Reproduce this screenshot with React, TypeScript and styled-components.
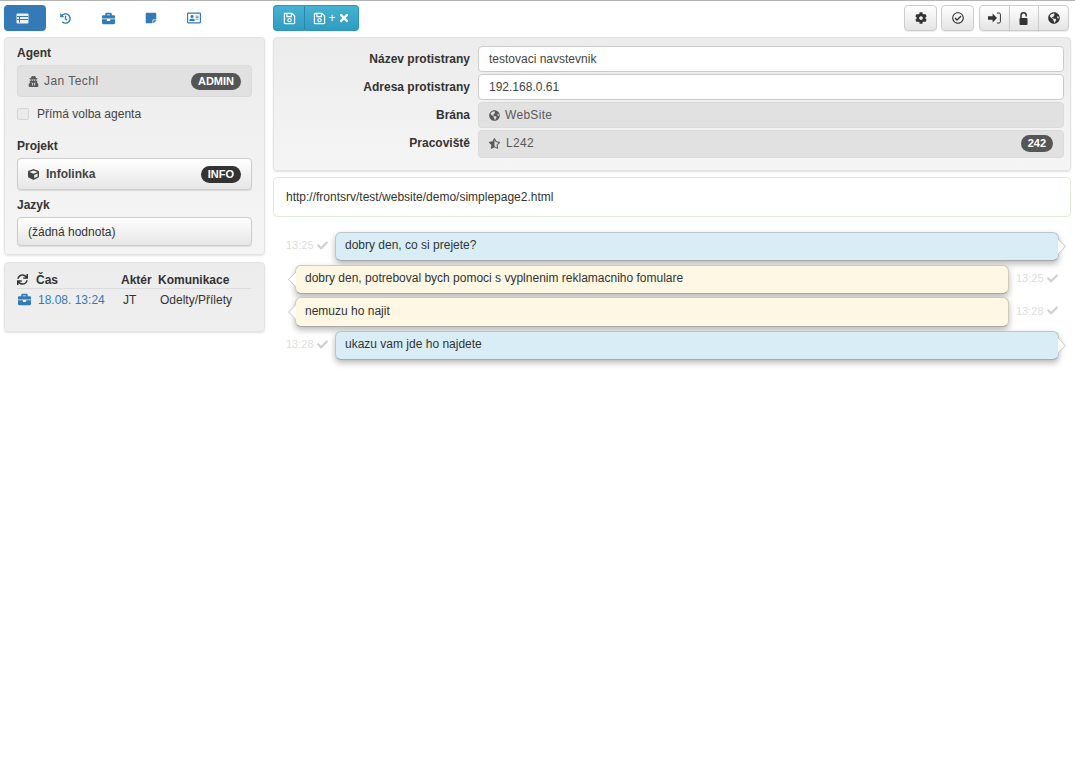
import React from 'react';
import styled, { createGlobalStyle } from 'styled-components';
import {
  FaHistory,
  FaBriefcase,
  FaStickyNote,
  FaRegAddressCard,
  FaUserSecret,
  FaCube,
  FaSync,
  FaRegSave,
  FaTimes,
  FaCog,
  FaRegCheckCircle,
  FaGlobeAmericas,
  FaStarHalfAlt,
  FaCheck
} from 'react-icons/fa';

const GlobalStyle = createGlobalStyle`
  html, body {
    margin: 0;
    padding: 0;
    background: #fff;
  }
  * {
    box-sizing: border-box;
  }
  body {
    font-family: "Liberation Sans", Arial, sans-serif;
    font-size: 12px;
    color: #333;
  }
`;

const Root = styled.div`
  border-top: 1px solid #b4b4b4;
  padding: 4px 4px 0;
  display: grid;
  grid-template-columns: 261px 798px;
  column-gap: 8px;
  min-height: 780px;
  align-content: start;
`;

const Column = styled.div`
  display: flex;
  flex-direction: column;
`;

const Toolbar = styled.div`
  display: flex;
  height: 26px;
  margin-bottom: 6px;
  align-items: stretch;
`;

const RightToolbar = styled(Toolbar)`
  padding-right: 2px;
`;

const Tab = styled.div<{ $active?: boolean }>`
  width: ${(props) => (props.$active ? '42px' : '43px')};
  padding-right: 5px;
  border-radius: 4px;
  display: flex;
  align-items: center;
  justify-content: center;
  font-size: 14px;
  color: #337ab7;
  background: ${(props) => (props.$active ? '#337ab7' : 'transparent')};
`;

const ButtonGroup = styled.div`
  display: flex;
`;

const SaveButton = styled.div<{ $wide?: boolean }>`
  height: 26px;
  width: ${(props) => (props.$wide ? '55px' : '31px')};
  color: #fff;
  font-size: 12px;
  display: flex;
  gap: 2px;
  align-items: center;
  justify-content: center;
  background: linear-gradient(to bottom, #46b2d4, #2f9cc0);
  border: 1px solid #2b96ba;
  border-radius: ${(props) => (props.$wide ? '0 4px 4px 0' : '4px 0 0 4px')};
  ${(props) => (props.$wide ? 'border-left: 1px solid #2a87a8;' : 'border-right: 0;')}
`;

const ToolSpacer = styled.div`
  flex: 1;
`;

const ToolButton = styled.div<{ $pos?: 'first' | 'mid' | 'last' }>`
  width: ${(props) =>
    props.$pos === 'mid' ? '30px' : props.$pos ? '31px' : '33px'};
  height: 26px;
  display: flex;
  align-items: center;
  justify-content: center;
  font-size: 12px;
  color: #333;
  background: linear-gradient(to bottom, #fff, #e4e4e4);
  border: 1px solid #ccc;
  border-radius: ${(props) =>
    props.$pos === 'first'
      ? '4px 0 0 4px'
      : props.$pos === 'last'
        ? '0 4px 4px 0'
        : props.$pos === 'mid'
          ? '0'
          : '4px'};
  ${(props) => (props.$pos && props.$pos !== 'first' ? 'margin-left: -1px;' : '')}
  box-shadow: 0 1px 1px rgba(0, 0, 0, 0.08);
`;

const ToolSet = styled.div`
  display: flex;
  margin-left: 5px;
`;

const ToolGap = styled.div`
  margin-left: 4px;
`;

const Well = styled.div`
  background: linear-gradient(to bottom, #ececec, #f5f5f5);
  border: 1px solid #e3e3e3;
  border-radius: 4px;
  box-shadow: 0 1px 2px rgba(0, 0, 0, 0.12);
`;

const AgentWell = styled(Well)`
  padding: 8px 12px 0;
  height: 218px;
  margin-bottom: 7px;
`;

const FieldTitle = styled.div<{ $mt?: number }>`
  font-weight: bold;
  font-size: 12px;
  line-height: 14px;
  color: #333;
  margin-top: ${(props) => props.$mt || 0}px;
`;

const ValueBox = styled.div<{ $mt: number; $h: number }>`
  margin-top: ${(props) => props.$mt}px;
  height: ${(props) => props.$h}px;
  border-radius: 4px;
  display: flex;
  align-items: center;
  padding: 0 10px;
  font-size: 12px;
`;

const ReadOnlyBox = styled(ValueBox)`
  background: #e1e1e1;
  border: 1px solid #dadada;
  color: #5a5a5a;
  letter-spacing: 0.45px;
`;

const SelectBox = styled(ValueBox)<{ $strong?: boolean }>`
  background: linear-gradient(to bottom, #fff, #e6e6e6);
  border: 1px solid #ccc;
  box-shadow: 0 1px 1px rgba(0, 0, 0, 0.1);
  color: #333;
  ${(props) => (props.$strong ? 'font-weight: bold; color: #444;' : 'padding-top: 1px;')}
`;

const BoxIcon = styled.span<{ $w: number }>`
  display: inline-flex;
  width: ${(props) => props.$w}px;
  font-size: 11px;
`;

const Badge = styled.span<{ $dark?: boolean }>`
  margin-left: auto;
  background: ${(props) => (props.$dark ? '#333' : '#555')};
  color: #fff;
  font-weight: bold;
  font-size: 11px;
  line-height: 11px;
  letter-spacing: 0;
  padding: 3px 7px;
  border-radius: 10px;
  min-height: 17px;
`;

const CheckRow = styled.div`
  display: flex;
  align-items: center;
  margin-top: 10px;
  color: #444;
`;

const CheckSquare = styled.span`
  width: 12px;
  height: 12px;
  border: 1px solid #d4d4d4;
  border-radius: 2px;
  background: #ebebeb;
  margin-right: 8px;
`;

const HistoryWell = styled(Well)`
  height: 70px;
  padding: 9px 13px 0 12px;
  background: linear-gradient(to bottom, #ececec, #efefef);
`;

const HistoryRow = styled.div<{ $head?: boolean }>`
  display: grid;
  grid-template-columns: 19px 85px 37px 1fr;
  align-items: center;
  height: ${(props) => (props.$head ? '17px' : '21px')};
  ${(props) =>
    props.$head
      ? 'border-bottom: 1px solid #dcdcdc; padding-bottom: 1px; font-weight: bold;'
      : ''}
`;

const RowIcon = styled.span<{ $blue?: boolean }>`
  display: inline-flex;
  font-size: ${(props) => (props.$blue ? '13px' : '11px')};
  padding-left: ${(props) => (props.$blue ? '1px' : '0')};
  color: ${(props) => (props.$blue ? '#337ab7' : '#333')};
`;

const TimeCell = styled.span`
  color: #337ab7;
  padding-left: 2px;
`;

const ActorCell = styled.span`
  padding-left: 2px;
`;

const CommCell = styled.span`
  padding-left: 2px;
`;

const FormWell = styled(Well)`
  padding: 8px 6px 0 0;
  height: 134px;
  margin-bottom: 6px;
`;

const FormRow = styled.div<{ $h: number }>`
  display: flex;
  align-items: center;
  height: ${(props) => props.$h}px;
  margin-bottom: 2px;
`;

const FormLabel = styled.div<{ $lift?: boolean }>`
  width: 196px;
  text-align: right;
  font-weight: bold;
  margin-right: 8px;
  color: #333;
  padding-bottom: ${(props) => (props.$lift ? '2px' : '0')};
`;

const Input = styled.div`
  flex: 1;
  height: 100%;
  background: #fff;
  border: 1px solid #ccc;
  border-radius: 4px;
  display: flex;
  align-items: center;
  padding: 0 10px;
  color: #444;
`;

const GreyField = styled(Input)<{ $lift?: boolean }>`
  background: #e1e1e1;
  border-color: #dadada;
  color: #5a5a5a;
  letter-spacing: 0.3px;
  padding-bottom: ${(props) => (props.$lift ? '2px' : '0')};
`;

const UrlBox = styled.div`
  height: 40px;
  border: 1px solid #e0ead6;
  border-radius: 4px;
  display: flex;
  align-items: center;
  padding-left: 12px;
  color: #333;
  margin-bottom: 15px;
`;

const MessageRow = styled.div<{ $mine?: boolean; $h: number; $mb: number }>`
  display: flex;
  align-items: center;
  height: ${(props) => props.$h}px;
  margin-bottom: ${(props) => props.$mb}px;
  padding-left: ${(props) => (props.$mine ? '13px' : '22px')};
`;

const Stamp = styled.div`
  display: flex;
  align-items: center;
  gap: 3px;
  color: #ddd;
  font-size: 11px;
  width: 49px;
  flex-shrink: 0;
  padding-bottom: 3px;

  svg {
    color: #cfcfcf;
  }
`;

const StampRight = styled(Stamp)`
  margin-left: 7px;
`;

const Bubble = styled.div<{ $mine?: boolean; $width: number }>`
  position: relative;
  width: ${(props) => props.$width}px;
  height: 100%;
  border-radius: 6px;
  border: 1px solid ${(props) => (props.$mine ? '#b9c6ce' : '#cfcab9')};
  border-bottom-color: #a9a9a9;
  background: ${(props) => (props.$mine ? '#d9edf7' : '#fdf7e3')};
  box-shadow: 0 3px 6px rgba(0, 0, 0, 0.28);
  display: flex;
  align-items: center;
  padding-left: 9px;
  padding-bottom: 3px;
  color: #333;

  &::before,
  &::after {
    content: '';
    position: absolute;
    top: 50%;
    transform: translateY(-50%);
    clip-path: ${(props) =>
      props.$mine
        ? 'polygon(0 0, 100% 50%, 0 100%)'
        : 'polygon(100% 0, 0 50%, 100% 100%)'};
  }

  &::before {
    ${(props) => (props.$mine ? 'right: -8px;' : 'left: -8px;')}
    width: 8px;
    height: 16px;
    background: #c4c4c4;
  }

  &::after {
    ${(props) => (props.$mine ? 'right: -7px;' : 'left: -7px;')}
    width: 7px;
    height: 14px;
    background: #fff;
  }
`;

const ListAltIcon: React.FC = () => (
  <svg width='13' height='11' viewBox='0 0 13 11'>
    <rect x='0.5' y='0.5' width='12' height='10' rx='1' fill='#eaf2f9' />
    <path d='M1 3.5h11M1 6.5h11M3.5 3.5v6' stroke='#337ab7' strokeWidth='1' />
  </svg>
);

const SignInIcon: React.FC = () => (
  <svg width='13' height='12' viewBox='0 0 13 12'>
    <path d='M0 4.2h4.6V1.6L9 6l-4.4 4.4V7.8H0z' fill='#333' />
    <path d='M9 1h2.2c.7 0 1.2.5 1.2 1.2v7.6c0 .7-.5 1.2-1.2 1.2H9' stroke='#333' fill='none' />
  </svg>
);

const UnlockIcon: React.FC = () => (
  <svg width='10' height='13' viewBox='0 0 10 13'>
    <rect x='0.5' y='6' width='8' height='7' rx='1' fill='#333' />
    <path d='M2 6.5V3.4a2.6 2.6 0 0 1 5.2 0V4.6' stroke='#333' strokeWidth='1.5' fill='none' />
  </svg>
);

const App: React.FC = () => (
  <>
    <GlobalStyle />
    <Root>
      <Column>
        <Toolbar>
          <Tab $active>
            <ListAltIcon />
          </Tab>
          <Tab>
            <FaHistory size={11} />
          </Tab>
          <Tab>
            <FaBriefcase size={13} />
          </Tab>
          <Tab>
            <FaStickyNote size={12} />
          </Tab>
          <Tab>
            <FaRegAddressCard size={14} />
          </Tab>
        </Toolbar>
        <AgentWell>
          <FieldTitle>Agent</FieldTitle>
          <ReadOnlyBox $mt={5} $h={32}>
            <BoxIcon $w={16}>
              <FaUserSecret />
            </BoxIcon>
            Jan Techl
            <Badge>ADMIN</Badge>
          </ReadOnlyBox>
          <CheckRow>
            <CheckSquare />
            Přímá volba agenta
          </CheckRow>
          <FieldTitle $mt={18}>Projekt</FieldTitle>
          <SelectBox $mt={5} $h={32} $strong>
            <BoxIcon $w={18}>
              <FaCube />
            </BoxIcon>
            Infolinka
            <Badge $dark>INFO</Badge>
          </SelectBox>
          <FieldTitle $mt={8}>Jazyk</FieldTitle>
          <SelectBox $mt={5} $h={29}>
            (žádná hodnota)
          </SelectBox>
        </AgentWell>
        <HistoryWell>
          <HistoryRow $head>
            <RowIcon>
              <FaSync />
            </RowIcon>
            <span>Čas</span>
            <span>Aktér</span>
            <span>Komunikace</span>
          </HistoryRow>
          <HistoryRow>
            <RowIcon $blue>
              <FaBriefcase />
            </RowIcon>
            <TimeCell>18.08. 13:24</TimeCell>
            <ActorCell>JT</ActorCell>
            <CommCell>Odelty/Přílety</CommCell>
          </HistoryRow>
        </HistoryWell>
      </Column>
      <Column>
        <RightToolbar>
          <ButtonGroup>
            <SaveButton>
              <FaRegSave size={13} />
            </SaveButton>
            <SaveButton $wide>
              <FaRegSave size={13} />+<FaTimes size={12} />
            </SaveButton>
          </ButtonGroup>
          <ToolSpacer />
          <ToolButton>
            <FaCog />
          </ToolButton>
          <ToolGap />
          <ToolButton>
            <FaRegCheckCircle />
          </ToolButton>
          <ToolSet>
            <ToolButton $pos='first'>
              <SignInIcon />
            </ToolButton>
            <ToolButton $pos='mid'>
              <UnlockIcon />
            </ToolButton>
            <ToolButton $pos='last'>
              <FaGlobeAmericas />
            </ToolButton>
          </ToolSet>
        </RightToolbar>
        <FormWell>
          <FormRow $h={26}>
            <FormLabel>Název protistrany</FormLabel>
            <Input>testovaci navstevnik</Input>
          </FormRow>
          <FormRow $h={26}>
            <FormLabel>Adresa protistrany</FormLabel>
            <Input>192.168.0.61</Input>
          </FormRow>
          <FormRow $h={26}>
            <FormLabel>Brána</FormLabel>
            <GreyField>
              <BoxIcon $w={16}>
                <FaGlobeAmericas />
              </BoxIcon>
              WebSite
            </GreyField>
          </FormRow>
          <FormRow $h={28}>
            <FormLabel $lift>Pracoviště</FormLabel>
            <GreyField $lift>
              <BoxIcon $w={17}>
                <FaStarHalfAlt />
              </BoxIcon>
              L242
              <Badge>242</Badge>
            </GreyField>
          </FormRow>
        </FormWell>
        <UrlBox>http://frontsrv/test/website/demo/simplepage2.html</UrlBox>
        <MessageRow $mine $h={29} $mb={4}>
          <Stamp>
            13:25 <FaCheck />
          </Stamp>
          <Bubble $mine $width={724}>
            dobry den, co si prejete?
          </Bubble>
        </MessageRow>
        <MessageRow $h={29} $mb={3}>
          <Bubble $width={714}>
            dobry den, potreboval bych pomoci s vyplnenim reklamacniho fomulare
          </Bubble>
          <StampRight>
            13:25 <FaCheck />
          </StampRight>
        </MessageRow>
        <MessageRow $h={30} $mb={4}>
          <Bubble $width={714}>nemuzu ho najit</Bubble>
          <StampRight>
            13:28 <FaCheck />
          </StampRight>
        </MessageRow>
        <MessageRow $mine $h={29} $mb={0}>
          <Stamp>
            13:28 <FaCheck />
          </Stamp>
          <Bubble $mine $width={724}>
            ukazu vam jde ho najdete
          </Bubble>
        </MessageRow>
      </Column>
    </Root>
  </>
);

export default App;
